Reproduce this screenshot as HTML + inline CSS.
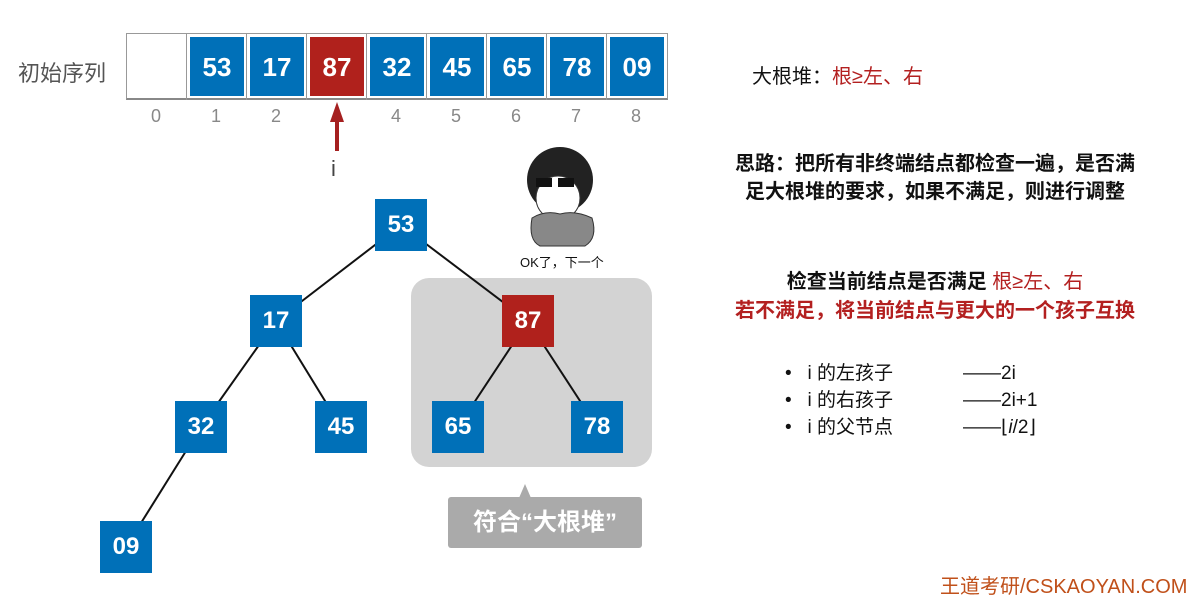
<!DOCTYPE html>
<html><head><meta charset="utf-8"><style>
body{margin:0;width:1193px;height:582px;background:#fff;position:relative;overflow:hidden;font-family:"Liberation Sans","Noto Sans CJK SC",sans-serif}
.a{position:absolute}
.cell{position:absolute;top:33px;width:60px;height:67px;border-left:1px solid #999;box-sizing:border-box}
.blk{position:absolute;left:3px;top:4px;width:54px;height:59px;background:#0070b8;color:#fff;font-size:26px;font-weight:bold;text-align:center;line-height:61px;font-family:"Liberation Sans Narrow","Liberation Sans",sans-serif}
.idx{position:absolute;top:106px;width:60px;text-align:center;color:#888;font-size:18px;font-family:"Liberation Sans Narrow","Liberation Sans",sans-serif}
.n{position:absolute;width:52px;height:52px;background:#0070b8;color:#fff;font-size:24px;text-align:center;line-height:52px;font-weight:bold}
.t{font-size:20px;font-weight:bold;color:#111}
.r{color:#b32020}
</style></head><body>
<div class="a" style="left:18px;top:56px;font-size:22px;color:#555">初始序列</div>
<div class="a" style="left:126px;top:33px;width:542px;height:67px;border:1px solid #999;border-bottom:2px solid #888;box-sizing:border-box"></div>
<div class="cell" style="left:186px"><div class="blk">53</div></div>
<div class="cell" style="left:246px"><div class="blk">17</div></div>
<div class="cell" style="left:306px"><div class="blk" style="background:#b0211c">87</div></div>
<div class="cell" style="left:366px"><div class="blk">32</div></div>
<div class="cell" style="left:426px"><div class="blk">45</div></div>
<div class="cell" style="left:486px"><div class="blk">65</div></div>
<div class="cell" style="left:546px"><div class="blk">78</div></div>
<div class="cell" style="left:606px"><div class="blk">09</div></div>
<div class="idx" style="left:126px">0</div><div class="idx" style="left:186px">1</div><div class="idx" style="left:246px">2</div>
<div class="idx" style="left:366px">4</div><div class="idx" style="left:426px">5</div><div class="idx" style="left:486px">6</div><div class="idx" style="left:546px">7</div><div class="idx" style="left:606px">8</div>
<svg class="a" style="left:0;top:0" width="1193" height="582">
<polygon points="337,102 330,122 344,122" fill="#a52020"/><rect x="335" y="120" width="4" height="31" fill="#a52020"/>
<rect x="411" y="278" width="241" height="189" rx="18" fill="#d3d3d3"/>
<g stroke="#111" stroke-width="2">
<line x1="401" y1="225" x2="276" y2="321"/><line x1="401" y1="225" x2="528" y2="321"/>
<line x1="276" y1="321" x2="201" y2="427"/><line x1="276" y1="321" x2="341" y2="427"/>
<line x1="528" y1="321" x2="458" y2="427"/><line x1="528" y1="321" x2="597" y2="427"/>
<line x1="201" y1="427" x2="126" y2="547"/></g>
<polygon points="525,484 519,498 531,498" fill="#aaa"/>
<rect x="448" y="497" width="194" height="51" rx="3" fill="#aaa"/>
<circle cx="560" cy="180" r="33" fill="#222"/><ellipse cx="558" cy="198" rx="22" ry="22" fill="#fff" stroke="#333"/>
<rect x="536" y="178" width="16" height="9" fill="#111"/><rect x="558" y="178" width="16" height="9" fill="#111"/>
<path d="M532 218 Q528 240 540 246 L585 246 Q598 238 592 218 Q575 210 560 214 Q545 210 532 218Z" fill="#888" stroke="#333"/>
</svg>
<div class="a" style="left:331px;top:156px;font-size:22px;color:#444">i</div>
<div class="n" style="left:375px;top:199px">53</div>
<div class="n" style="left:250px;top:295px">17</div>
<div class="n" style="left:502px;top:295px;background:#b0211c">87</div>
<div class="n" style="left:175px;top:401px">32</div>
<div class="n" style="left:315px;top:401px">45</div>
<div class="n" style="left:432px;top:401px">65</div>
<div class="n" style="left:571px;top:401px">78</div>
<div class="n" style="left:100px;top:521px">09</div>
<div class="a" style="left:448px;top:497px;width:194px;line-height:51px;text-align:center;color:#fff;font-size:24px;font-weight:bold">符合“大根堆”</div>
<div class="a" style="left:520px;top:252px;font-size:13px;color:#111">OK了，下一个</div>
<div class="a" style="left:752px;top:60px;font-size:20px;color:#111">大根堆：<span class="r">根≥左、右</span></div>
<div class="a t" style="left:710px;top:150px;line-height:28px;width:450px;text-align:center">思路：把所有非终端结点都检查一遍，是否满<br>足大根堆的要求，如果不满足，则进行调整</div>
<div class="a t" style="left:710px;top:268px;line-height:29px;width:450px;text-align:center">检查当前结点是否满足 <span class="r" style="font-weight:normal">根≥左、右</span><br><span class="r">若不满足，将当前结点与更大的一个孩子互换</span></div>
<div class="a" style="left:785px;top:360px;font-size:19px;line-height:27px;color:#111">
<div>•&nbsp;&nbsp;&nbsp;i 的左孩子<span class="a" style="left:178px;white-space:nowrap">——2i</span></div>
<div>•&nbsp;&nbsp;&nbsp;i 的右孩子<span class="a" style="left:178px;top:27px;white-space:nowrap">——2i+1</span></div>
<div>•&nbsp;&nbsp;&nbsp;i 的父节点<span class="a" style="left:178px;top:54px;white-space:nowrap">——⌊<i>i</i>/2⌋</span></div></div>
<div class="a" style="left:940px;top:570px;font-size:20px;color:#c0501a;white-space:nowrap">王道考研/CSKAOYAN.COM</div>
</body></html>
